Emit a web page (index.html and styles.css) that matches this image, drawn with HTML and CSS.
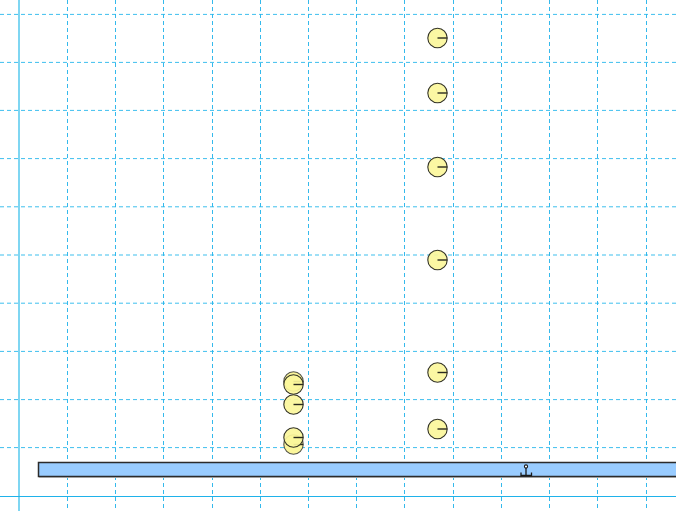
FILE: index.html
```html
<!DOCTYPE html>
<html>
<head>
<meta charset="utf-8">
<link rel="stylesheet" href="styles.css">
</head>
<body>
<div class="stage">
<svg class="world" width="676" height="511" viewBox="0 0 676 511" xmlns="http://www.w3.org/2000/svg">
  <g class="grid">
    <line x1="67.5" y1="0" x2="67.5" y2="511"/>
    <line x1="115.5" y1="0" x2="115.5" y2="511"/>
    <line x1="163.5" y1="0" x2="163.5" y2="511"/>
    <line x1="212.5" y1="0" x2="212.5" y2="511"/>
    <line x1="260.5" y1="0" x2="260.5" y2="511"/>
    <line x1="308.5" y1="0" x2="308.5" y2="511"/>
    <line x1="356.5" y1="0" x2="356.5" y2="511"/>
    <line x1="404.5" y1="0" x2="404.5" y2="511"/>
    <line x1="453.5" y1="0" x2="453.5" y2="511"/>
    <line x1="501.5" y1="0" x2="501.5" y2="511"/>
    <line x1="549.5" y1="0" x2="549.5" y2="511"/>
    <line x1="597.5" y1="0" x2="597.5" y2="511"/>
    <line x1="646.5" y1="0" x2="646.5" y2="511"/>
    <line class="soft" x1="0" y1="14.4" x2="676" y2="14.4"/>
    <line class="soft" x1="0" y1="62.4" x2="676" y2="62.4"/>
    <line class="soft" x1="0" y1="110.4" x2="676" y2="110.4"/>
    <line class="soft" x1="0" y1="158.6" x2="676" y2="158.6"/>
    <line class="soft" x1="0" y1="206.8" x2="676" y2="206.8"/>
    <line class="soft" x1="0" y1="255" x2="676" y2="255"/>
    <line class="soft" x1="0" y1="303.2" x2="676" y2="303.2"/>
    <line class="soft" x1="0" y1="351.4" x2="676" y2="351.4"/>
    <line class="soft" x1="0" y1="399.6" x2="676" y2="399.6"/>
    <line class="soft" x1="0" y1="447.6" x2="676" y2="447.6"/>
  </g>
  <line class="axis-y" x1="19" y1="0" x2="19" y2="511"/>
  <line class="axis-x" x1="0" y1="496.5" x2="676" y2="496.5"/>

  <g class="bar">
    <rect class="bar-shadow" x="39" y="464" width="660" height="14"/>
    <rect class="bar-body" x="38.5" y="462.5" width="660" height="14"/>
  </g>

  <g class="anchor">
    <line x1="526" y1="468" x2="526" y2="475.5"/>
    <path d="M521 472.5 V475.5 H531.5 V472.5"/>
    <circle cx="526" cy="466.5" r="1.6"/>
  </g>

  <g class="balls">
    <g><circle cx="437.5" cy="38" r="9.7"/><line x1="437.5" y1="38" x2="447.2" y2="38"/></g>
    <g><circle cx="437.5" cy="93" r="9.7"/><line x1="437.5" y1="93" x2="447.2" y2="93"/></g>
    <g><circle cx="437.5" cy="167" r="9.7"/><line x1="437.5" y1="167" x2="447.2" y2="167"/></g>
    <g><circle cx="437.5" cy="260" r="9.7"/><line x1="437.5" y1="260" x2="447.2" y2="260"/></g>
    <g><circle cx="437.5" cy="372.5" r="9.7"/><line x1="437.5" y1="372.5" x2="447.2" y2="372.5"/></g>
    <g><circle cx="437.5" cy="429" r="9.7"/><line x1="437.5" y1="429" x2="447.2" y2="429"/></g>

    <g class="behind"><circle cx="293.5" cy="381.5" r="9.7"/><line x1="293.5" y1="381.5" x2="303.2" y2="381.5"/></g>
    <g><circle cx="293.5" cy="384.5" r="9.7"/><line x1="293.5" y1="384.5" x2="303.2" y2="384.5"/></g>
    <g><circle cx="293.5" cy="404.5" r="9.7"/><line x1="293.5" y1="404.5" x2="303.2" y2="404.5"/></g>
    <g class="behind"><circle cx="293.5" cy="444.5" r="9.7"/><line x1="293.5" y1="444.5" x2="303.2" y2="444.5"/></g>
    <g><circle cx="293.5" cy="437.5" r="9.7"/><line x1="293.5" y1="437.5" x2="303.2" y2="437.5"/></g>
  </g>
</svg>
</div>
</body>
</html>
```
FILE: styles.css
```css
html, body {
  margin: 0;
  padding: 0;
  background: #ffffff;
  overflow: hidden;
}

.stage {
  width: 676px;
  height: 511px;
  position: relative;
  background: #ffffff;
}

.world {
  display: block;
}

.grid line {
  stroke: #1fb2ea;
  stroke-width: 1;
  stroke-dasharray: 4 3;
  opacity: 0.9;
}

.grid line.soft {
  stroke: #29b8ec;
}

.axis-y {
  stroke: #7fd6f2;
  stroke-width: 2;
}

.axis-x {
  stroke: #1fb2ea;
  stroke-width: 1;
}

.bar-shadow {
  fill: #c8c8c8;
}

.bar-body {
  fill: #99ccff;
  stroke: #2b2b2b;
  stroke-width: 1.5;
}

.anchor line,
.anchor path {
  stroke: #1a1a1a;
  stroke-width: 1.3;
  fill: none;
}

.anchor circle {
  fill: #ffffff;
  stroke: #1a1a1a;
  stroke-width: 1.1;
}

.balls circle {
  fill: #fbf69b;
  fill-opacity: 0.92;
  stroke: #333326;
  stroke-width: 1.1;
}

.balls line {
  stroke: #2a2a20;
  stroke-width: 1.4;
}

.balls .behind circle {
  stroke: #55554a;
  fill-opacity: 1;
}
```
